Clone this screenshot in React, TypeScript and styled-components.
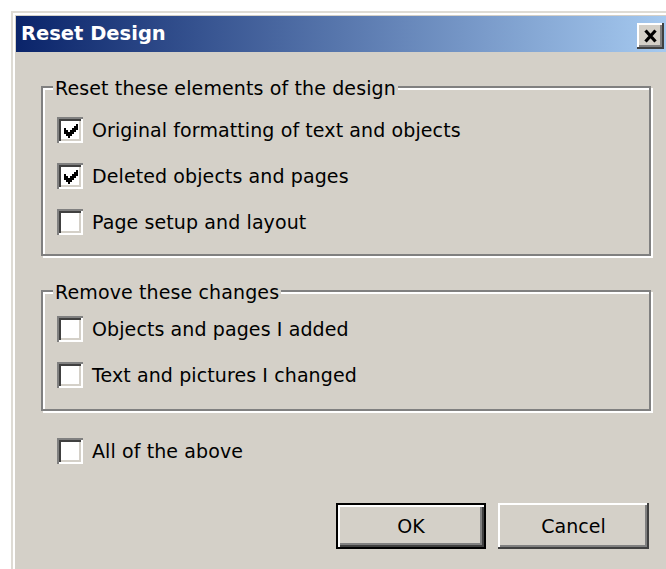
import React from "react";
import styled, { createGlobalStyle } from "styled-components";

const GlobalStyle = createGlobalStyle`
  html, body {
    margin: 0;
    padding: 0;
    background: #ffffff;
    overflow: hidden;
  }
  body {
    font-family: "DejaVu Sans", Tahoma, Verdana, sans-serif;
    color: #000000;
  }
`;

const FACE = "#d4d0c8";

const Window = styled.div`
  box-sizing: border-box;
  margin: 11px 0 0 11px;
  width: 662px;
  height: 562px;
  padding: 5px 5px 0 5px;
  background: ${FACE};
  box-shadow: inset 2px 2px 0 #dedbd4, inset 4px 4px 0 #ffffff;
  display: flex;
  flex-direction: column;
`;

const TitleBar = styled.div`
  height: 36px;
  display: flex;
  align-items: flex-start;
  justify-content: space-between;
  padding: 0 4px 0 5px;
  background: linear-gradient(to right, #0a246a, #a6caf0);
`;

const Title = styled.span`
  color: #ffffff;
  font-weight: bold;
  font-size: 19.5px;
  line-height: 36px;
`;

const CloseButton = styled.button`
  box-sizing: border-box;
  margin-top: 7px;
  width: 27px;
  height: 26px;
  padding: 0 0 1px 0;
  border: none;
  background: ${FACE};
  box-shadow: inset -2px -2px 0 #404040, inset 2px 2px 0 #ffffff,
    inset -4px -4px 0 #808080;
  display: flex;
  align-items: center;
  justify-content: center;
`;

const Content = styled.div`
  display: flex;
  flex-direction: column;
  padding: 34px 17px 0 25px;
`;

const GroupBox = styled.div<{ $gapTop: number; $padBottom: number; $space: number }>`
  margin-top: ${(p) => p.$space}px;
  border: 2px solid #808080;
  box-shadow: inset 2px 2px 0 #ffffff, 2px 2px 0 #ffffff;
  padding: 0 0 ${(p) => p.$padBottom}px 14px;
  display: flex;
  flex-direction: column;

  & > ul {
    margin-top: ${(p) => p.$gapTop}px;
  }
`;

const Legend = styled.div`
  align-self: flex-start;
  margin: -11px 0 0 -4px;
  padding: 0 2px;
  background: ${FACE};
  font-size: 19px;
  letter-spacing: 0.12px;
  line-height: 22px;
`;

const OptionList = styled.ul`
  list-style: none;
  margin: 0;
  padding: 0;
  display: flex;
  flex-direction: column;
  gap: 20px;
`;

const Row = styled.li<{ $indent?: number; $space?: number }>`
  display: flex;
  align-items: center;
  gap: 9px;
  height: 26px;
  margin: ${(p) => p.$space ?? 0}px 0 0 ${(p) => p.$indent ?? 0}px;
  font-size: 19px;
  letter-spacing: 0.1px;
  list-style: none;
`;

const Box = styled.span`
  box-sizing: border-box;
  flex: none;
  width: 26px;
  height: 26px;
  background: #ffffff;
  box-shadow: inset 2px 2px 0 #808080, inset -2px -2px 0 #ffffff,
    inset 4px 4px 0 #404040, inset -4px -4px 0 ${FACE};
  display: flex;
  align-items: center;
  justify-content: center;
  padding: 2px 0 0 2px;
`;

const ButtonRow = styled.div`
  display: flex;
  justify-content: flex-end;
  gap: 12px;
  margin: 39px 2px 0 0;
`;

const DialogButton = styled.button<{ $default?: boolean; $width: number }>`
  box-sizing: border-box;
  width: ${(p) => p.$width}px;
  height: 46px;
  font-family: "DejaVu Sans", Tahoma, Verdana, sans-serif;
  font-size: 19px;
  color: #000000;
  background: ${FACE};
  border: ${(p) => (p.$default ? "2px solid #000000" : "none")};
  box-shadow: ${(p) =>
    p.$default
      ? "inset 2px 2px 0 #ffffff, inset -2px -2px 0 #404040, inset -4px -4px 0 #808080"
      : "inset -2px -2px 0 #404040, inset 2px 2px 0 #ffffff, inset -4px -4px 0 #808080"};
  padding: 0;
`;

// Seven-by-seven tick, drawn at double size
const tickCells: [number, number][] = [
  [6, 0],
  [5, 1], [6, 1],
  [0, 2], [4, 2], [5, 2], [6, 2],
  [0, 3], [1, 3], [3, 3], [4, 3], [5, 3],
  [0, 4], [1, 4], [2, 4], [3, 4], [4, 4],
  [1, 5], [2, 5], [3, 5],
  [2, 6],
];

const Tick = () => (
  <svg width="14" height="14" viewBox="0 0 7 7" shapeRendering="crispEdges">
    {tickCells.map(([x, y]) => (
      <rect key={`${x}-${y}`} x={x} y={y} width="1" height="1" fill="#000" />
    ))}
  </svg>
);

const CloseGlyph = () => (
  <svg width="13" height="14" viewBox="0 0 13 14">
    <path d="M1.5 1.5 L11.5 12.5 M11.5 1.5 L1.5 12.5" stroke="#000" strokeWidth="3.2" fill="none" />
  </svg>
);

const Option = ({
  label,
  checked,
  indent,
  space,
}: {
  label: string;
  checked?: boolean;
  indent?: number;
  space?: number;
}) => (
  <Row $indent={indent} $space={space}>
    <Box>{checked ? <Tick /> : null}</Box>
    <span>{label}</span>
  </Row>
);

export default function App() {
  return (
    <>
      <GlobalStyle />
      <Window>
        <TitleBar>
          <Title>Reset Design</Title>
          <CloseButton aria-label="Close">
            <CloseGlyph />
          </CloseButton>
        </TitleBar>
        <Content>
          <GroupBox $space={0} $gapTop={18} $padBottom={19}>
            <Legend>Reset these elements of the design</Legend>
            <OptionList>
              <Option label="Original formatting of text and objects" checked />
              <Option label="Deleted objects and pages" checked />
              <Option label="Page setup and layout" />
            </OptionList>
          </GroupBox>
          <GroupBox $space={34} $gapTop={13} $padBottom={21}>
            <Legend>Remove these changes</Legend>
            <OptionList>
              <Option label="Objects and pages I added" />
              <Option label="Text and pictures I changed" />
            </OptionList>
          </GroupBox>
          <OptionList>
            <Option label="All of the above" indent={16} space={27} />
          </OptionList>
          <ButtonRow>
            <DialogButton $default $width={150}>OK</DialogButton>
            <DialogButton $width={151}>Cancel</DialogButton>
          </ButtonRow>
        </Content>
      </Window>
    </>
  );
}
